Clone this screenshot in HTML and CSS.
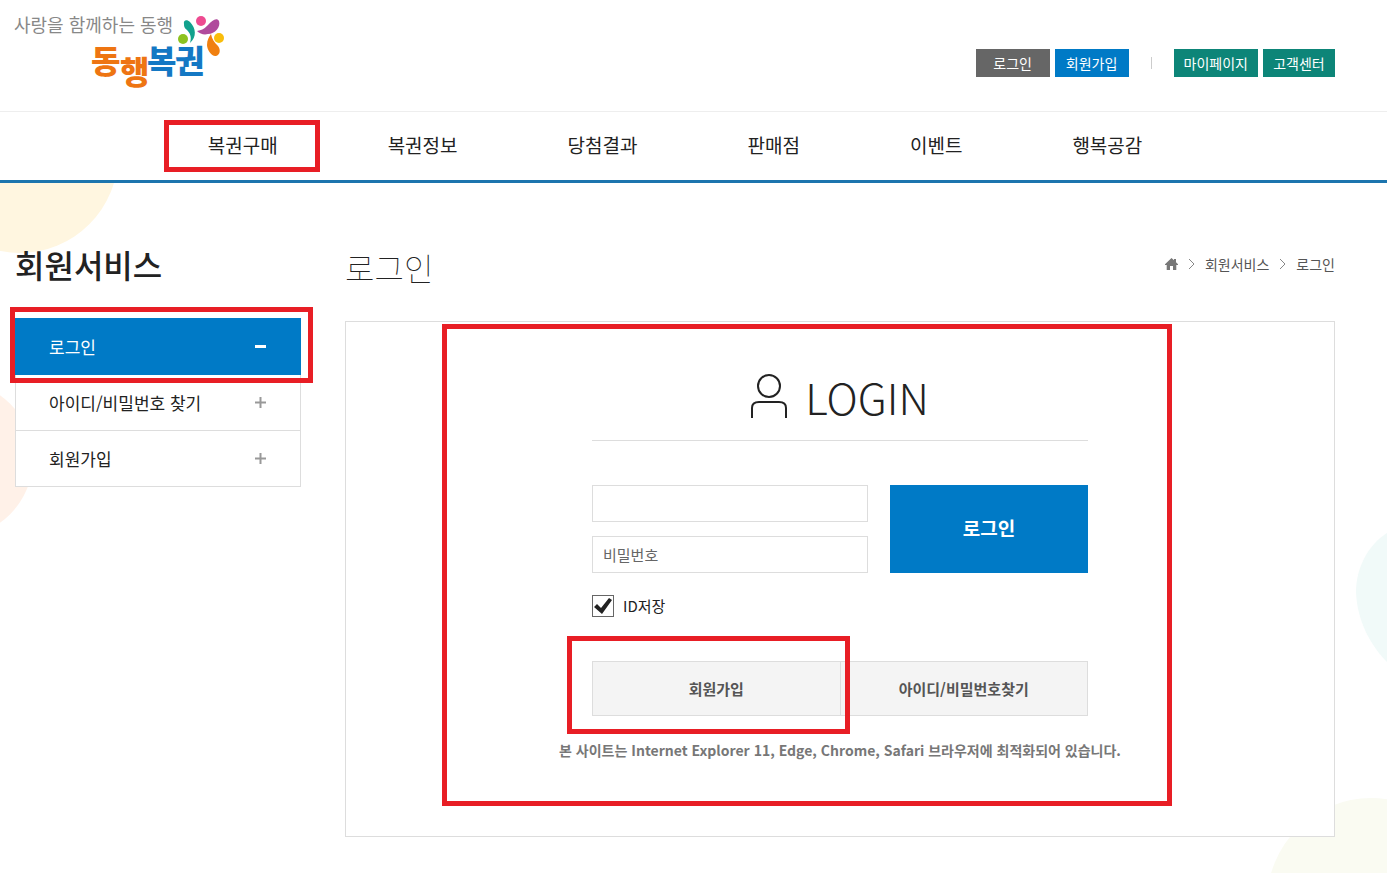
FILE: index.html
```
<!DOCTYPE html>
<html lang="ko">
<head>
    <meta charset="UTF-8">
    <meta name="viewport" content="width=device-width, initial-scale=1.0">
    <title>동행복권 로그인</title>
    <link rel="stylesheet" href="styles.css">
</head>
<body>
    <!-- background circles -->
    <svg class="deco deco-left" width="130" height="360" viewBox="0 0 130 360" aria-hidden="true">
        <circle cx="20" cy="-28" r="98" fill="#fff6e0"/>
        <circle cx="-45" cy="276" r="78" fill="#fff1e8"/>
    </svg>
    <svg class="deco deco-right" width="120" height="345" viewBox="0 0 120 345" aria-hidden="true">
        <path d="M120 5C101 17 89 40 89 64C90 92 103 117 120 134Z" fill="#f1faf9"/>
        <circle cx="104" cy="374" r="104" fill="#fafbf2"/>
    </svg>

    <header class="header">
        <a class="logo" href="#" aria-label="동행복권">
            <svg width="220" height="108" viewBox="0 0 220 108">
                <text class="logo-slogan" x="-1" y="32">사랑을 함께하는 동행</text>
                <text class="logo-name" y="73"><tspan class="orange" x="76">동</tspan><tspan class="orange" x="105" y="84">행</tspan><tspan class="blue" x="132" y="73">복</tspan><tspan class="blue" x="160">권</tspan></text>
                <circle cx="186" cy="21" r="5" fill="#ee4b91"/>
                <circle cx="168" cy="39" r="5" fill="#8dc21f"/>
                <circle cx="204" cy="38" r="5" fill="#f9bd0b"/>
                <path d="M169 24C168 20 172 19 175 22C181 28 182 37 175 43C177 37 175 33 172 30C169 28 169 26 169 24Z" fill="#12a18d"/>
                <path d="M204 21C206 27 200 34 193 34C189 35 185 34 182 31C188 30 190 28 193 25C197 20 202 17 204 21Z" fill="#b04a9c"/>
                <path d="M196 34C197 39 199 42 203 46C206 50 205 55 201 56C197 57 192 50 192 45C192 40 194 37 196 34Z" fill="#f08010"/>
            </svg>
        </a>
        <div class="util">
            <a class="util-btn gray" href="#">로그인</a>
            <a class="util-btn blue" href="#">회원가입</a>
            <span class="util-line"></span>
            <a class="util-btn green" href="#">마이페이지</a>
            <a class="util-btn green" href="#">고객센터</a>
        </div>
    </header>

    <nav class="gnb">
        <a class="marked mark-menu" href="#">복권구매</a>
        <a href="#">복권정보</a>
        <a href="#">당첨결과</a>
        <a href="#">판매점</a>
        <a href="#">이벤트</a>
        <a href="#">행복공감</a>
    </nav>

    <div class="container">
        <aside class="side">
            <h2 class="side-title">회원서비스</h2>
            <ul class="side-menu">
                <li class="marked mark-side"><a class="active" href="#">로그인
                    <svg width="11" height="11" viewBox="0 0 11 11"><path d="M0 5.5H11" stroke="#fff" stroke-width="3"/></svg></a></li>
                <li><a href="#">아이디/비밀번호 찾기
                    <svg width="11" height="11" viewBox="0 0 11 11"><path d="M0 5.5H11M5.5 0V11" stroke="#999" stroke-width="2"/></svg></a></li>
                <li><a href="#">회원가입
                    <svg width="11" height="11" viewBox="0 0 11 11"><path d="M0 5.5H11M5.5 0V11" stroke="#999" stroke-width="2"/></svg></a></li>
            </ul>
        </aside>

        <main class="content">
            <div class="content-head">
                <h1>로그인</h1>
                <div class="location">
                    <a href="#" aria-label="홈"><svg width="13" height="12" viewBox="0 0 13 12"><path d="M6.5 0L9 2.3V1H11V4.2L13 6.2V7H11.3V12H8V8H5V12H1.7V7H0V6.2Z" fill="#777"/></svg></a>
                    <svg width="7" height="12" viewBox="0 0 7 12"><path d="M1 1L6 6L1 11" fill="none" stroke="#888"/></svg>
                    <a href="#">회원서비스</a>
                    <svg width="7" height="12" viewBox="0 0 7 12"><path d="M1 1L6 6L1 11" fill="none" stroke="#888"/></svg>
                    <a href="#">로그인</a>
                </div>
            </div>

            <section class="login-box">
                <div class="login-area marked mark-login">
                    <form class="login-form">
                        <h2 class="login-title">
                            <svg width="36" height="46" viewBox="0 0 36 46" fill="none" stroke="#222"><circle cx="18" cy="13" r="11" stroke-width="2"/><path d="M1 45V35C1 31 4 29 8 29H28C32 29 35 31 35 35V45" stroke-width="2"/></svg>
                            <span>LOGIN</span>
                        </h2>
                        <div class="fields">
                            <div class="inputs">
                                <input type="text" aria-label="아이디">
                                <input type="password" placeholder="비밀번호" aria-label="비밀번호">
                            </div>
                            <button class="login-btn" type="submit">로그인</button>
                        </div>
                        <div class="save-id">
                            <input type="checkbox" id="saveId" checked>
                            <label for="saveId">ID저장</label>
                        </div>
                        <div class="links">
                            <a class="marked mark-join" href="#">회원가입</a>
                            <a href="#">아이디/비밀번호찾기</a>
                        </div>
                    </form>
                    <p class="notice">본 사이트는 Internet Explorer 11, Edge, Chrome, Safari 브라우저에 최적화되어 있습니다.</p>
                </div>
            </section>
        </main>
    </div>
</body>
</html>
```
FILE: styles.css
```
* {
    box-sizing: border-box;
}
body {
    position: relative;
    margin: 0;
    min-height: 100vh;
    background-color: #fff;
    color: #222;
    font-family: "Noto Sans CJK KR", sans-serif;
    font-size: 15px;
}
a {
    color: inherit;
    text-decoration: none;
}
h1, h2, p, ul {
    margin: 0;
    padding: 0;
}
ul {
    list-style: none;
}
.deco {
    position: absolute;
    z-index: -1;
}
.deco-left {
    top: 183px;
    left: 0;
}
.deco-right {
    top: 528px;
    right: 0;
}

/* header */
.header {
    display: flex;
    justify-content: space-between;
    align-items: flex-start;
    height: 112px;
    padding: 0 52px 0 15px;
    border-bottom: 1px solid #eee;
}
.logo svg {
    display: block;
    overflow: visible;
}
.logo-slogan {
    font-size: 18px;
    fill: #888;
}
.logo-name {
    font-size: 32px;
    font-weight: 900;
}
.logo-name .orange {
    fill: #ee7512;
}
.logo-name .blue {
    fill: #1478c4;
}
.util {
    display: flex;
    align-items: center;
    gap: 5px;
    margin-top: 49px;
}
.util-btn {
    min-width: 72px;
    padding: 0 10px;
    color: #fff;
    font-size: 14px;
    line-height: 28px;
    text-align: center;
}
.util-btn.gray,
.util-btn.blue {
    min-width: 74px;
}
.gray {
    background-color: #666;
}
.util-btn.blue {
    background-color: #007ac6;
}
.green {
    background-color: #0d8578;
}
.util-line {
    width: 1px;
    height: 12px;
    margin: 0 17px;
    background-color: #ccc;
}

/* main menu */
.gnb {
    display: flex;
    justify-content: center;
    gap: 110px;
    padding: 0 52px 2px 15px;
    border-bottom: 3px solid #1c75ae;
    font-size: 19px;
    line-height: 66px;
}

/* red frames */
.marked {
    position: relative;
}
.marked::before {
    content: "";
    position: absolute;
    z-index: 1;
    border: 5px solid #e81e25;
    pointer-events: none;
}
.mark-menu::before {
    inset: 8px -42px 6px -44px;
}
.mark-side::before {
    inset: -11px -12px -8px -5px;
}
.mark-login::before {
    inset: 0;
}
.mark-join::before {
    inset: -26px -10px -19px -26px;
}

/* layout */
.container {
    display: flex;
    gap: 44px;
    padding: 56px 52px 36px 15px;
}
.side {
    width: 286px;
}
.side-title {
    margin-bottom: 28px;
    font-size: 32px;
    font-weight: 500;
    line-height: 51px;
}
.side-menu a {
    display: flex;
    justify-content: space-between;
    align-items: center;
    height: 56px;
    padding: 0 34px 0 33px;
    border: 1px solid #ddd;
    border-top: 0;
    background-color: #fff;
    font-size: 17px;
}
.side-menu .active {
    height: 57px;
    border-color: #007ac6;
    background-color: #007ac6;
    color: #fff;
}
.content {
    flex: 1;
}
.content-head {
    display: flex;
    justify-content: space-between;
    align-items: flex-start;
    height: 82px;
}
.content-head h1 {
    font-size: 32px;
    font-weight: 100;
    line-height: 56px;
}
.location {
    display: flex;
    align-items: center;
    gap: 10px;
    color: #555;
    font-size: 14px;
    line-height: 50px;
}
.location svg {
    display: block;
}

/* login */
.login-box {
    display: flex;
    justify-content: center;
    padding: 2px 0 30px;
    border: 1px solid #ddd;
    background-color: #fff;
}
.login-area {
    display: flex;
    flex-direction: column;
    align-items: center;
    width: 730px;
    margin-left: -66px;
    padding: 44px 0 42px 66px;
}
.login-form {
    width: 496px;
}
.login-title {
    display: flex;
    justify-content: center;
    align-items: center;
    gap: 18px;
    height: 73px;
    padding-bottom: 16px;
    border-bottom: 1px solid #ddd;
    font-size: 43px;
    font-weight: 200;
    line-height: 56px;
}
.fields {
    display: flex;
    gap: 22px;
    margin-top: 44px;
}
.inputs {
    display: flex;
    flex: 1;
    flex-direction: column;
    gap: 14px;
}
.inputs input {
    width: 100%;
    height: 37px;
    padding: 0 10px;
    border: 1px solid #ddd;
    font-family: inherit;
    font-size: 15px;
}
.inputs input::placeholder {
    color: #666;
}
.login-btn {
    width: 198px;
    padding-bottom: 4px;
    border: 0;
    background-color: #007ac6;
    color: #fff;
    font-family: inherit;
    font-size: 19px;
    font-weight: 700;
    cursor: pointer;
}
.save-id {
    display: flex;
    align-items: center;
    gap: 9px;
    margin-top: 22px;
    line-height: 22px;
}
.save-id input {
    appearance: none;
    width: 22px;
    height: 22px;
    margin: 0;
    border: 1px solid #666;
    background-color: #fff;
}
.save-id input:checked::after {
    content: "";
    display: block;
    height: 20px;
    background-color: #222;
    clip-path: polygon(1px 11px, 4px 8px, 8px 12px, 16px 2px, 19px 4px, 9px 18px);
}
.links {
    display: flex;
    margin-top: 44px;
    border: 1px solid #ddd;
    background-color: #f4f4f4;
    color: #555;
    font-weight: 700;
    line-height: 53px;
    text-align: center;
}
.links a {
    flex: 1;
}
.links a + a {
    border-left: 1px solid #ddd;
}
.notice {
    margin-top: 22px;
    padding-bottom: 2px;
    color: #777;
    font-size: 14px;
    font-weight: 700;
    line-height: 24px;
}
```
